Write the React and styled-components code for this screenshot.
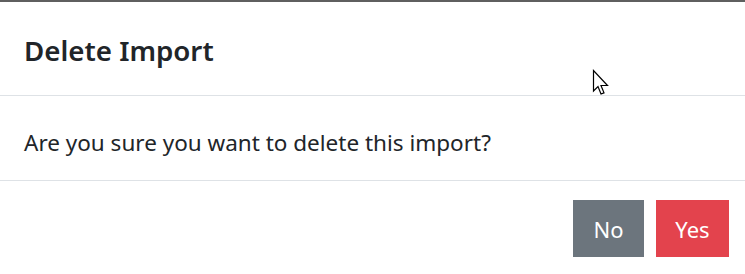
import styled, { createGlobalStyle } from "styled-components";

const GlobalStyle = createGlobalStyle`
	html, body {
		margin: 0;
		padding: 0;
		background: #fff;
	}
	body {
		font-family: "Noto Sans", "Open Sans", sans-serif;
		color: #212529;
	}
`;

const Modal = styled.div`
	position: relative;
	width: 745px;
	height: 274px;
	box-sizing: border-box;
	border-top: 2px solid #5f5f5f;
	background: #fff;
	display: flex;
	flex-direction: column;
`;

const Header = styled.header`
	height: 94px;
	box-sizing: border-box;
	padding: 4px 24px 0;
	display: flex;
	align-items: center;
	border-bottom: 1px solid #dee2e6;
	h5 {
		margin: 0;
		font-size: 27.7px;
		font-weight: 600;
		line-height: 1.2;
	}
`;

const Body = styled.section`
	height: 85px;
	box-sizing: border-box;
	padding: 8px 24px 0;
	display: flex;
	align-items: center;
	border-bottom: 1px solid #dee2e6;
	font-size: 22.5px;
`;

const Footer = styled.footer`
	display: flex;
	justify-content: flex-end;
	gap: 12px;
	padding: 19px 16px 0;
`;

const Button = styled.button`
	height: 57px;
	width: ${(p) => (p.$variant === "danger" ? "73px" : "71px")};
	padding: 0;
	border: none;
	border-radius: 0;
	font-family: inherit;
	font-size: 22px;
	color: #fff;
	background: ${(p) => (p.$variant === "danger" ? "#e3434d" : "#6c757d")};
	cursor: pointer;
`;

const Cursor = styled.svg`
	position: absolute;
	left: 592px;
	top: 67px;
`;

export default function App() {
	return (
		<>
			<GlobalStyle />
			<Modal>
				<Header>
					<h5>Delete Import</h5>
				</Header>
				<Body>Are you sure you want to delete this import?</Body>
				<Footer>
					<Button>No</Button>
					<Button $variant="danger">Yes</Button>
				</Footer>
				<Cursor width="20" height="30" viewBox="0 0 20 30">
					<path
						d="M1.5 1.5 L1.5 22 L6 17.5 L9 25 L12 23.8 L9 16.5 L15.5 16.5 Z"
						fill="#fff"
						stroke="#000"
						strokeWidth="1.2"
						strokeLinejoin="miter"
					/>
				</Cursor>
			</Modal>
		</>
	);
}
